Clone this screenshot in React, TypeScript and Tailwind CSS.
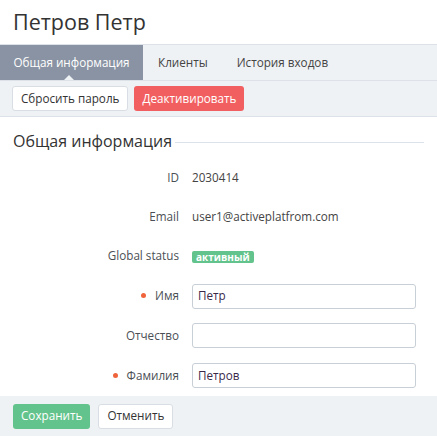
import React from 'react';

const font = { fontFamily: '"Open Sans", "Liberation Sans", sans-serif' };

const Row: React.FC<{ label: string; required?: boolean; children: React.ReactNode; h: string }> = ({ label, required, children, h }) => (
  <div className={`flex items-center ${h}`}>
    <div className="w-[179px] flex items-center justify-end text-[11.7px] text-[#4b4f55]">
      {required && <span className="w-[5px] h-[5px] rounded-full bg-[#f0643c] mr-[9px]"></span>}
      {label}
    </div>
    <div className="ml-[13px] flex items-center">{children}</div>
  </div>
);

const Input: React.FC<{ value: string }> = ({ value }) => (
  <div className="w-[224px] h-[25px] border border-[#c9cfd6] rounded-[3px] bg-white px-[5px] flex items-center text-[11.7px] text-[#3a2a4a]">
    {value}
  </div>
);

export default function App() {
  return (
    <div className="w-[437px] h-[436px] bg-white overflow-hidden" style={font}>
      <div className="h-[44px] px-[13px] flex items-center text-[21.5px] text-[#333]">Петров Петр</div>

      {/* tabs */}
      <div className="h-[37px] flex border-t border-b border-[#dde2e8] bg-[#eff2f5] text-[11.7px]">
        <div className="relative w-[143px] bg-[#8993a3] text-white flex items-center justify-center">
          Общая информация
          <span className="absolute bottom-0 left-[64px] w-0 h-0 border-l-[5px] border-r-[5px] border-b-[5px] border-l-transparent border-r-transparent border-b-[#eff2f5]"></span>
        </div>
        <div className="pl-[15px] pr-[14px] flex items-center text-[#444]">Клиенты</div>
        <div className="px-[15px] flex items-center text-[#444]">История входов</div>
      </div>

      {/* actions */}
      <div className="h-[36px] flex items-center gap-[6px] px-[12px] bg-[#eff2f5] border-b border-[#dde2e8]">
        <button className="h-[25px] px-[8px] rounded-[3px] bg-white border border-[#d9dee4] text-[11.7px] text-[#333]">Сбросить пароль</button>
        <button className="h-[25px] px-[8px] rounded-[3px] bg-[#f25f61] text-[11.7px] text-white">Деактивировать</button>
      </div>

      {/* section */}
      <div className="h-[40px] flex items-center px-[13px] pt-[8px]">
        <span className="text-[16px] text-[#333]">Общая информация</span>
        <span className="flex-1 h-px bg-[#dde2e8] ml-[3px] mt-[2px]"></span>
      </div>

      <div className="pt-[2px]">
        <Row label="ID" h="h-[38px]">
          <span className="text-[11.7px] text-[#444]">2030414</span>
        </Row>
        <Row label="Email" h="h-[39px]">
          <span className="text-[11.7px] text-[#444]">user1@activeplatfrom.com</span>
        </Row>
        <Row label="Global status" h="h-[40px]">
          <span className="h-[12px] px-[4px] rounded-[2px] bg-[#63c38c] text-white text-[10px] font-bold leading-[12px] mt-[1px]">активный</span>
        </Row>
        <Row label="Имя" required h="h-[40px]">
          <Input value="Петр" />
        </Row>
        <Row label="Отчество" h="h-[39px]">
          <Input value="" />
        </Row>
        <Row label="Фамилия" required h="h-[41px]">
          <Input value="Петров" />
        </Row>
      </div>

      {/* footer */}
      <div className="h-[40px] bg-[#eff2f5] flex items-center gap-[8px] px-[13px]">
        <button className="h-[25px] px-[8px] rounded-[3px] bg-[#63c38c] text-[11.7px] text-white">Сохранить</button>
        <button className="h-[25px] px-[8px] rounded-[3px] bg-white border border-[#d9dee4] text-[11.7px] text-[#333]">Отменить</button>
      </div>
    </div>
  );
}
